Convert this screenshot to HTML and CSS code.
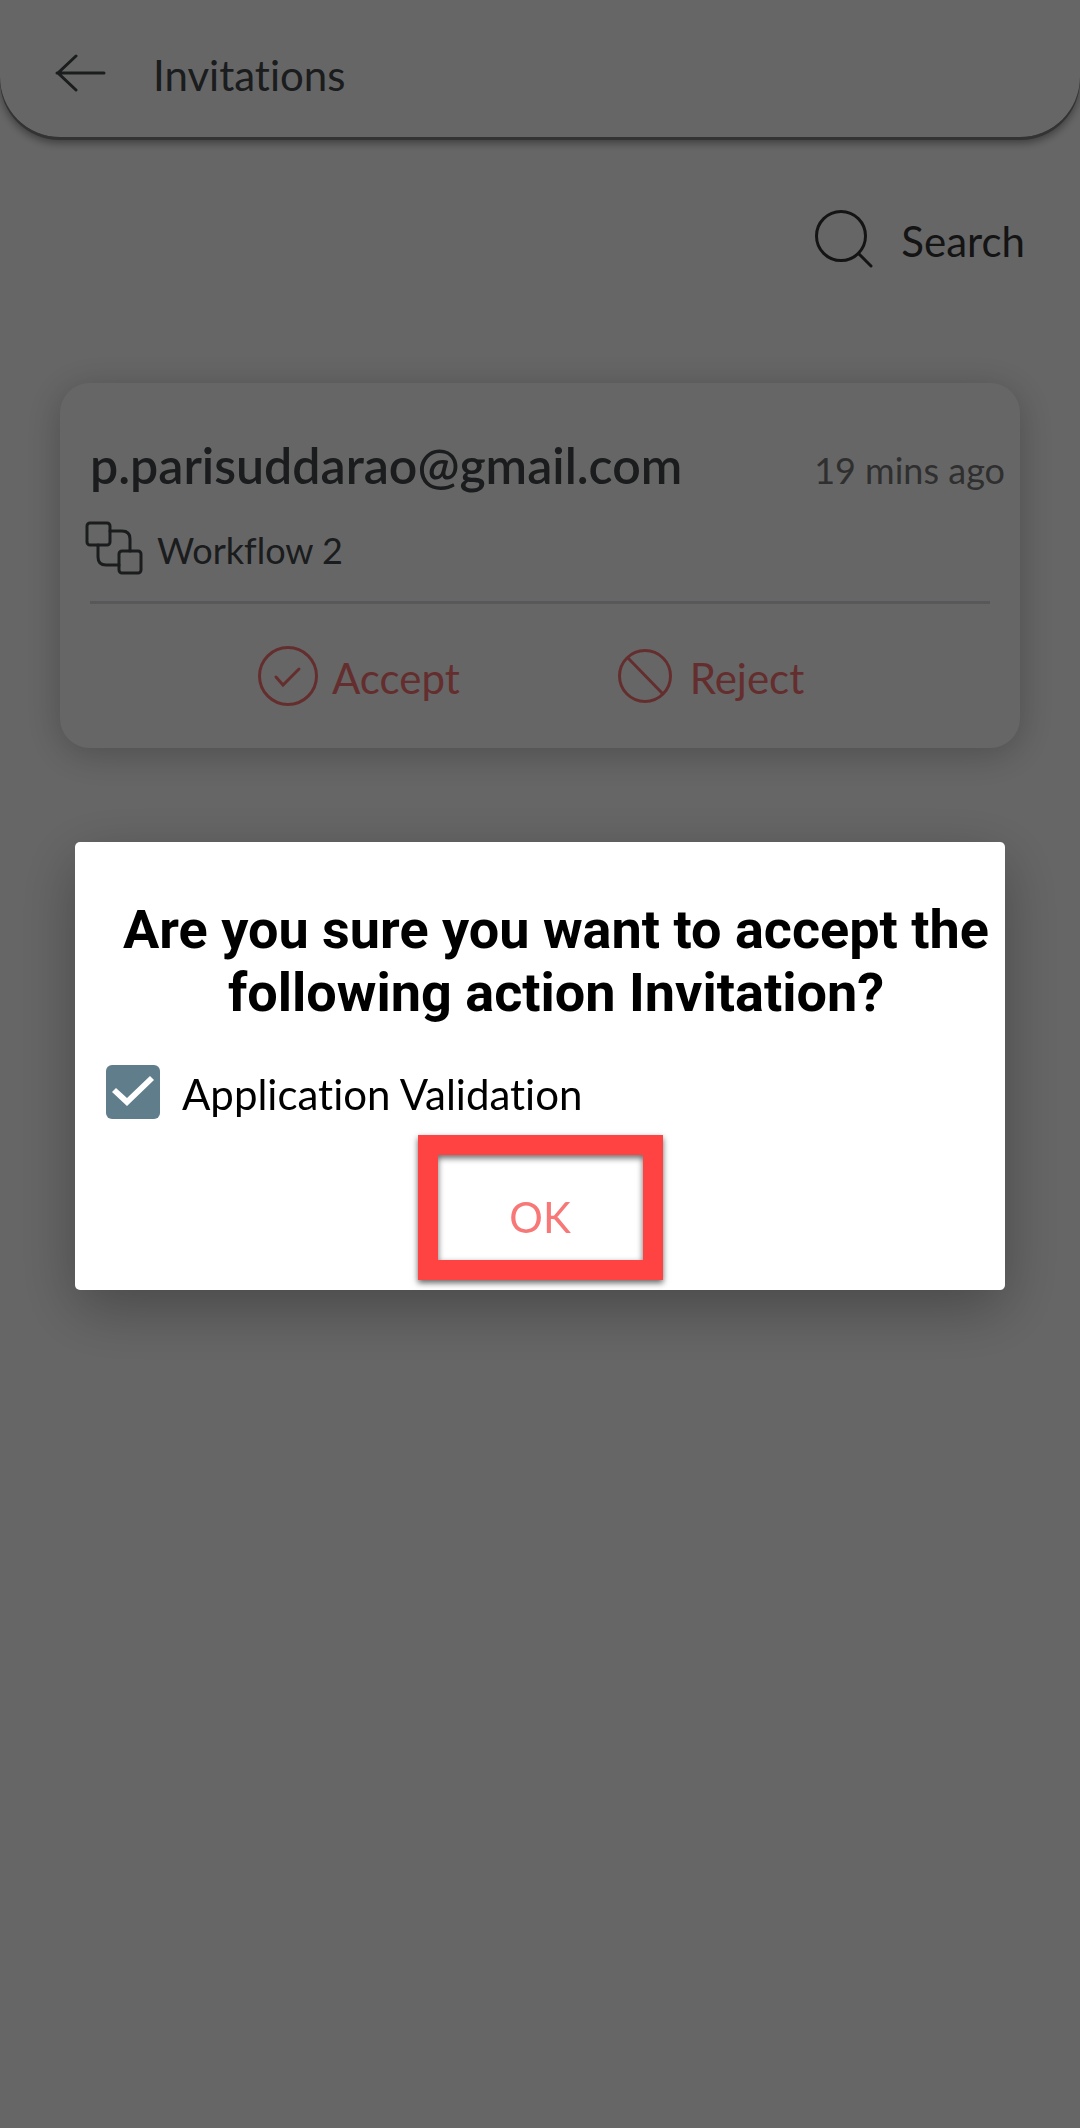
FILE: index.html
```html
<!DOCTYPE html>
<html lang="en">
<head>
  <meta charset="UTF-8">
  <meta name="viewport" content="width=device-width, initial-scale=1.0">
  <title>Invitations</title>
  <link rel="stylesheet" href="styles.css">
</head>
<body>
  <header class="header">
    <a class="back" href="#" aria-label="Back">
      <svg width="52" height="38" viewBox="0 0 52 38"><path d="M49 19H2M21 2L3 19l18 17"/></svg>
    </a>
    <h1>Invitations</h1>
  </header>
  <main>
    <div class="toolbar">
      <button class="search" type="button">
        <svg width="58" height="58" viewBox="0 0 58 58"><circle cx="26" cy="26" r="24.5"/><path d="M44 44l12 12"/></svg>
        Search
      </button>
    </div>
    <article class="card">
      <div class="card-top">
        <h2>p.parisuddarao@gmail.com</h2>
        <span class="time">19 mins ago</span>
      </div>
      <div class="workflow">
        <svg width="58" height="54" viewBox="0 0 58 54">
          <rect x="2" y="2" width="23" height="22" rx="3"/>
          <rect x="34" y="30" width="22" height="22" rx="3"/>
          <path d="M25 10h12q8 0 8 8v12M13 24v12q0 8 8 8h13"/>
        </svg>
        Workflow 2
      </div>
      <div class="actions">
        <button type="button">
          <svg width="60" height="60" viewBox="0 0 60 60"><circle cx="30" cy="30" r="28.5"/><path d="M18 31l7 8 16-16"/></svg>
          Accept
        </button>
        <button type="button">
          <svg width="58" height="60" viewBox="0 0 58 60"><circle cx="27" cy="30" r="25.5"/><path d="M10 12l34 35"/></svg>
          Reject
        </button>
      </div>
    </article>
  </main>
  <div class="overlay">
    <div class="dialog" role="dialog" aria-modal="true" aria-labelledby="dialog-title">
      <h2 id="dialog-title">Are you sure you want to accept the following action Invitation?</h2>
      <div class="option">
        <input type="checkbox" id="validation" checked>
        <label for="validation">Application Validation</label>
      </div>
      <button class="ok" type="button">OK</button>
    </div>
  </div>
</body>
</html>
```

FILE: styles.css
```css
* {
  box-sizing: border-box;
  margin: 0;
  padding: 0;
}

body {
  min-height: 100vh;
  background: #fff;
  color: #424649;
  font-family: Lato, "Open Sans", sans-serif;
  font-size: 42px;
  font-variant-ligatures: none;
  line-height: 50px;
}

button {
  border: none;
  background: none;
  font: inherit;
  font-variant-ligatures: none;
  color: inherit;
  cursor: pointer;
}

svg {
  display: block;
  flex: none;
  margin-bottom: 4px;
  fill: none;
  stroke: currentColor;
  stroke-width: 3;
  stroke-linecap: round;
}

.header {
  display: flex;
  align-items: center;
  gap: 46px;
  height: 137px;
  padding: 12px 55px 0;
  border-radius: 0 0 60px 60px;
  box-shadow: 0 3px 0 #808080, 0 6px 8px rgba(0, 0, 0, .4);
}

.header h1 {
  font-size: 42px;
  font-weight: 400;
}

.back {
  color: inherit;
}

.toolbar {
  display: flex;
  justify-content: flex-end;
  padding: 73px 55px 0;
}

.search {
  display: flex;
  align-items: center;
  gap: 28px;
  color: #333;
}

.card {
  margin: 111px 60px 0;
  border-radius: 30px;
  box-shadow: 0 6px 36px rgba(0, 0, 0, .24);
}

.card-top {
  display: flex;
  justify-content: space-between;
  align-items: baseline;
  padding: 57px 15px 0 30px;
}

.card-top h2 {
  font-size: 50px;
  font-weight: 600;
}

.time {
  color: #777;
  font-size: 36px;
}

.workflow {
  display: flex;
  align-items: center;
  gap: 14px;
  padding: 26px 25px 22px;
  font-size: 36px;
}

.actions {
  display: flex;
  gap: 158px;
  margin: 0 30px;
  padding: 42px 168px 38px;
  border-top: 3px solid #dcdce0;
  color: #fa7373;
}

.actions button {
  display: flex;
  align-items: center;
  gap: 14px;
}

.overlay {
  position: fixed;
  inset: 0;
  display: flex;
  align-items: center;
  padding: 4px 75px 0;
  background: rgba(0, 0, 0, .6);
}

.dialog {
  flex: 1;
  padding: 56px 0 10px;
  border-radius: 5px;
  background: #fff;
  box-shadow: 0 18px 60px rgba(0, 0, 0, .3);
}

.dialog h2 {
  padding: 0 15px 0 47px;
  color: #000;
  font: bold 54px/63px Roboto, sans-serif;
  text-align: center;
}

.option {
  display: flex;
  align-items: center;
  gap: 22px;
  padding: 41px 31px 12px;
  color: #000;
}

.option input {
  appearance: none;
  width: 54px;
  height: 54px;
  margin-bottom: 4px;
  border-radius: 6px;
  background: #607d8b;
}

.option input:checked::before {
  content: "";
  display: block;
  height: 100%;
  background: #fff;
  clip-path: polygon(6px 27px, 10px 23px, 21px 33px, 44px 11px, 48px 15px, 21px 41px);
}

.ok {
  display: block;
  width: 245px;
  margin: 0 auto;
  padding: 37px 0 18px;
  border: 20px solid #ff4343;
  box-shadow: 0 3px 6px rgba(0, 0, 0, .6), inset 0 3px 6px rgba(0, 0, 0, .6);
  color: #f87777;
}
```
